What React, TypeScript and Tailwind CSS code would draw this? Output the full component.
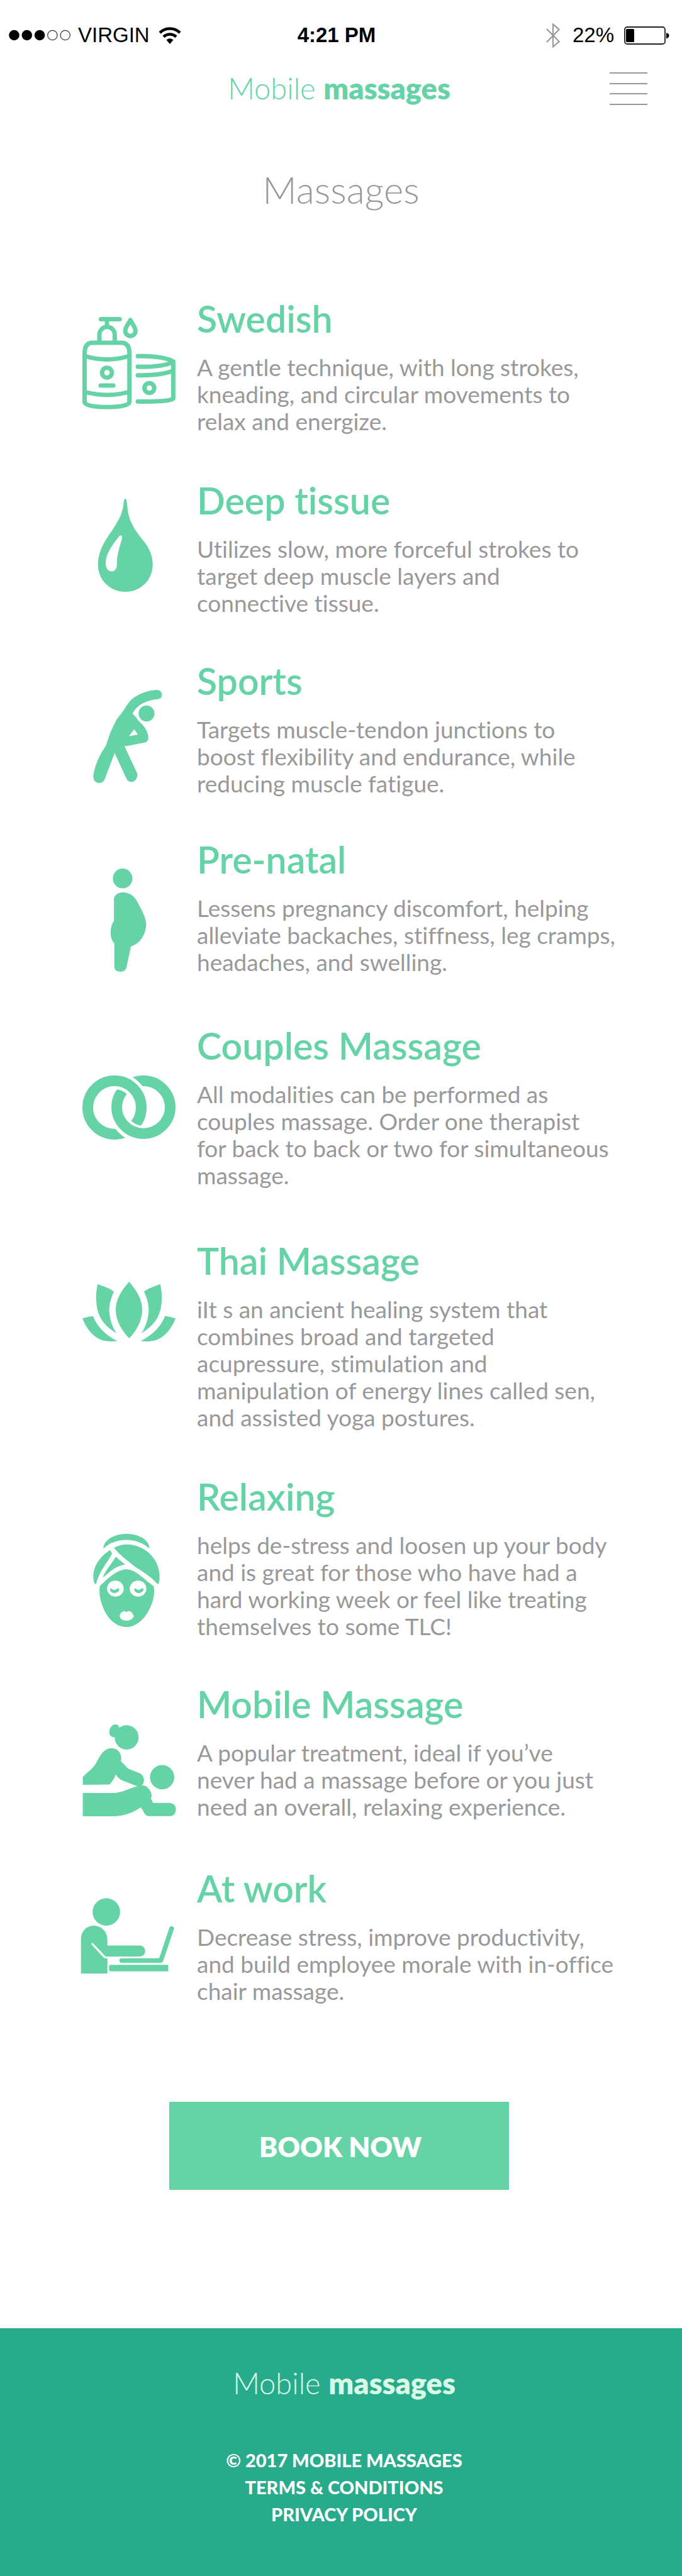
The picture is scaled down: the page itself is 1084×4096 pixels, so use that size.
import type { ReactNode } from "react";

function Glyph({ className, box, children }: { className: string; box: string; children: ReactNode }) {
  return (
    <svg
      aria-hidden="true"
      viewBox={box}
      preserveAspectRatio="none"
      className={`w-[148px] overflow-visible fill-[#66d3a6] ${className}`}
    >
      {children}
    </svg>
  );
}

function LotionIcon() {
  return (
    <svg
      aria-hidden="true"
      viewBox="0 0 148 147"
      className="mt-[29px] h-[147px] w-[148px] fill-none stroke-[#66d3a6] stroke-7"
      strokeLinecap="round"
      strokeLinejoin="round"
    >
      <path d="M3.5 135V58Q3.5 41 16 41H62Q74.7 41 74.7 58V135C74.7 141 58 143.2 39 143.2S3.5 141 3.5 135Z" />
      <path d="M3.5 62Q39 73 74.7 62M3.5 119Q39 129 74.7 119" strokeLinecap="butt" />
      <path d="M29 109H49" />
      <circle cx="39" cy="88.6" r="7.8" />
      <path d="M27 40V28a12.2 12.2 0 0 1 24.4 0V40M39 15V4M29.3 3.5H59.2" />
      <path d="M76.2 5C73 11 68 17 68 22a8.2 8.2 0 0 0 16.4 0C84.4 17 79.5 11 76.2 5Z" />
      <path d="M88 62.3C112 61.5 136 65 144.4 71C136 77 112 80 88 79" />
      <path d="M144.4 71V130C139 133 120 135 88 134.5M88 92.7C112 93.5 135 90 144.4 85" />
      <circle cx="106.4" cy="113" r="7.8" />
    </svg>
  );
}

function DropIcon() {
  return (
    <Glyph box="39 174 257 615" className="mt-[29px] h-[148px]">
      <path d="M157.500 174C161 174 162 195 163 225C166 330 187 390 210 460C226 510 233 560 233 610C233 710 200 789 157.500 789C115 789 82 710 82 610C82 540 94 480 108 430C130 350 150 290 153 200C154 180 155 174 157.500 174Z" />
      <path
        className="fill-white"
        d="M145 417C149 417 149 425 148 440C142 490 134 545 134 610C134 640 127 654 119 654C111 654 103 635 103 600C104 540 118 490 138 430C140 421 142 417 145 417Z"
      />
    </Glyph>
  );
}

function StretchIcon() {
  return (
    <Glyph box="39 233 257 616" className="mt-[46px] h-[148px]">
      <ellipse cx="216" cy="389" rx="22" ry="53" />
      <path
        fillRule="evenodd"
        d="M244 233C254 233 259 248 258 270C257 285 254 292 248 294C215 300 190 330 177 390C184 405 190 420 193 436C207 465 219 500 221 545C221 562 219 574 214 579L162 604H155L190 785C193 805 188 825 183 835C176 845 168 845 162 828L128 650L102 815C99 838 93 849 86 849C76 849 69 835 69 800C73 740 82 690 91 650L104 600L117 510L133 430L150 378L160 340Q170 303 182 282Q210 237 244 233ZM182 493L167 540L192 528Z"
      />
    </Glyph>
  );
}

function PregnancyIcon() {
  return (
    <Glyph box="39 215 257 679" className="mt-[46px] h-[164px]">
      <ellipse cx="150" cy="280.500" rx="27" ry="65" />
      <path d="M150 372C172 372 186 405 194 450C208 510 215 550 215 585C213 660 195 715 173 727L162 850C160 885 155 894 144 894C131 894 127 880 127 855V708C120 690 117 665 117 635C117 605 121 575 126 560V415C127 390 137 372 150 372Z" />
    </Glyph>
  );
}

function RingsIcon() {
  return (
    <svg
      aria-hidden="true"
      viewBox="0 0 148 102"
      className="mt-[79px] h-[102px] w-[148px] fill-none stroke-[#66d3a6] stroke-[17]"
    >
      <circle cx="97" cy="51" r="42.5" />
      <path d="M8.500 51A42.500 42.500 0 0 1 93.500 51" className="stroke-white stroke-[27]" />
      <circle cx="51" cy="51" r="42.5" />
      <path d="M54.500 51A42.500 42.500 0 0 0 139.500 51" className="stroke-white stroke-[27]" />
      <path d="M54.500 50A42.500 42.500 0 0 0 139.500 50" />
    </svg>
  );
}

function LotusIcon() {
  const side = (
    <>
      <path d="M81 317C100 332 115 345 126 366C117 410 113 450 113 490C114 545 122 600 133 638C98 590 82 530 78 450C76 400 77 360 81 317Z" />
      <path d="M68 525C78 590 102 650 135 690C120 694 105 694 92 684C66 660 48 600 39 541C48 534 58 528 68 525Z" />
    </>
  );
  return (
    <Glyph box="39 300 257 393" className="mt-[65px] h-[95px]">
      <path d="M168 300C190 360 204 420 204 485C204 550 190 620 168 672C146 620 131 550 131 485C131 420 145 360 168 300Z" />
      {side}
      <g transform="translate(335 0) scale(-1 1)">{side}</g>
    </Glyph>
  );
}

function FaceIcon() {
  const lid =
    "M115 772C118 765 120 768 121 772Q127 782 133 772C136 764 140 767 141 773C140 790 133 798 127 798C121 798 115 788 115 772Z";
  return (
    <Glyph box="39 407 257 616" className="mt-[91px] h-[148px]">
      <path d="M97 505C97 450 125 407 161 407C197 407 224 450 224 505C207 468 185 447 161 447C136 447 112 468 97 505Z" />
      <path d="M126 500C136 485 148 477 161 477C210 477 252 570 252 690C252 710 251 725 249 738H246C225 680 200 650 182 620C160 580 140 540 126 500Z" />
      <path d="M115 514L121 536C108 600 88 640 77 738H73C70 720 69 705 69 690C69 620 88 555 115 514Z" />
      <path d="M131 558L157 610C132 618 115 655 96 697C98 660 119 610 131 558Z" />
      <path d="M161 641C185 641 205 700 236 753C239 800 236 850 224 905C210 975 185 1023 161 1023C135 1023 110 975 98 905C88 850 84 800 87 753C110 700 135 641 161 641Z" />
      <ellipse className="fill-white" cx="130" cy="769" rx="23" ry="53" />
      <ellipse className="fill-white" cx="192.500" cy="769" rx="23" ry="53" />
      <path d={lid} />
      <path d={lid} transform="translate(67 0)" />
      <path
        className="fill-white"
        d="M161 924C166 914 172 918 175 926L181 949C178 970 170 981 161 981C151 981 142 970 142 949C142 935 148 920 154 918C158 918 160 924 161 924Z"
      />
    </Glyph>
  );
}

function TableMassageIcon() {
  return (
    <Glyph box="39 281 257 604" className="mt-[64px] h-[146px]">
      <ellipse cx="161" cy="366" rx="33" ry="80" />
      <path d="M131 281C137 281 140 292 141 303L128 365C118 368 113 350 113 330C114 300 121 281 131 281Z" />
      <path d="M40 625C60 580 70 570 80 520C90 475 100 437 120 437C137 437 150 475 145 522L165 572L195 600C205 610 209 630 209 650C208 670 204 682 200 686H189L150 650C140 640 135 625 131 610C127 640 120 660 114 676L40 678Z" />
      <path d="M40 732H125C145 730 165 705 189 688C200 680 210 680 216 690C228 715 233 745 228 768L234 797H278C292 799 297 815 297 842C296 868 291 882 283 884H222C213 882 209 865 207 850L200 826C180 860 155 884 125 885H40Z" />
      <ellipse cx="259" cy="628" rx="33.500" ry="80" />
    </Glyph>
  );
}

function LaptopIcon() {
  return (
    <Glyph box="39 228 257 500" className="mt-[47px] h-[120px]">
      <ellipse cx="105" cy="320" rx="38" ry="91" />
      <path d="M35 728V500C35 450 50 411 70 411C92 411 108 450 108 505V543H198C208 546 212 560 212 580C212 600 207 613 198 615H103L68 527C66 523 63 527 64 535L95 615C98 625 102 628 108 628V728Z" />
      <path d="M146 627H251L279 425C281 410 291 410 292 430L262 645C260 655 258 657 255 657H146C139 655 139 629 146 627Z" />
      <path d="M116 671H276V713H116C111 708 111 675 116 671Z" />
    </Glyph>
  );
}

const services = [
  {
    name: "Swedish",
    icon: <LotionIcon />,
    gap: "mb-[73px]",
    text: "A gentle technique, with long strokes,\nkneading, and circular movements to\nrelax and energize.",
  },
  {
    name: "Deep tissue",
    icon: <DropIcon />,
    gap: "mb-[71px]",
    text: "Utilizes slow, more forceful strokes to\ntarget deep muscle layers and\nconnective tissue.",
  },
  {
    name: "Sports",
    icon: <StretchIcon />,
    gap: "mb-[68px]",
    text: "Targets muscle-tendon junctions to\nboost flexibility and endurance, while\nreducing muscle fatigue.",
  },
  {
    name: "Pre-natal",
    icon: <PregnancyIcon />,
    gap: "mb-[80px]",
    text: "Lessens pregnancy discomfort, helping\nalleviate backaches, stiffness, leg cramps,\nheadaches, and swelling.",
  },
  {
    name: "Couples Massage",
    icon: <RingsIcon />,
    gap: "mb-[83px]",
    text: "All modalities can be performed as\ncouples massage. Order one therapist\nfor back to back or two for simultaneous\nmassage.",
  },
  {
    name: "Thai Massage",
    icon: <LotusIcon />,
    gap: "mb-[73px]",
    text: "iIt s an ancient healing system that\ncombines broad and targeted\nacupressure, stimulation and\nmanipulation of energy lines called sen,\nand assisted yoga postures.",
  },
  {
    name: "Relaxing",
    icon: <FaceIcon />,
    gap: "mb-[71px]",
    text: "helps de-stress and loosen up your body\nand is great for those who have had a\nhard working week or feel like treating\nthemselves to some TLC!",
  },
  {
    name: "Mobile Massage",
    icon: <TableMassageIcon />,
    gap: "mb-[77px]",
    text: "A popular treatment, ideal if you’ve\nnever had a massage before or you just\nneed an overall, relaxing experience.",
  },
  {
    name: "At work",
    icon: <LaptopIcon />,
    gap: "",
    text: "Decrease stress, improve productivity,\nand build employee morale with in-office\nchair massage.",
  },
];

function StatusBar() {
  return (
    <div className="grid h-28 grid-cols-[1fr_auto_1fr] items-center pr-5 pl-[14px] font-['Liberation_Sans',sans-serif] text-[33px] leading-10 text-black">
      <div className="flex items-center">
        <svg aria-hidden="true" viewBox="0 0 98 18" className="h-[18px] w-[98px]">
          <circle cx="8.500" cy="9" r="8.300" />
          <circle cx="28.800" cy="9" r="8.300" />
          <circle cx="49.100" cy="9" r="8.300" />
          <circle cx="69.400" cy="9" r="7.700" fill="none" stroke="#333" strokeWidth="1.200" />
          <circle cx="89.700" cy="9" r="7.700" fill="none" stroke="#333" strokeWidth="1.200" />
        </svg>
        <span className="ml-3">VIRGIN</span>
        <svg aria-hidden="true" viewBox="0 0 36 27" className="ml-[14px] h-[27px] w-[36px]">
          <path d="M18 27L12.500 20.500A8 8 0 0 1 23.500 20.500Z" />
          <path d="M8 15.500A14.500 14.500 0 0 1 28 15.500M2 9A23 23 0 0 1 34 9" fill="none" stroke="#000" strokeWidth="4.600" />
        </svg>
      </div>
      <span className="pr-2 font-bold">4:21 PM</span>
      <div className="flex items-center justify-end">
        <svg aria-hidden="true" viewBox="0 0 22 39" className="mr-5 h-[39px] w-[22px]">
          <path d="M1 9L20.500 29L11 37.500V1.500L20.500 10L1 30" fill="none" stroke="#999" strokeWidth="2.200" />
        </svg>
        <span>22%</span>
        <svg aria-hidden="true" viewBox="0 0 72 29" className="ml-4 h-[29px] w-[72px]">
          <rect x="1" y="1" width="64" height="27" rx="4" fill="none" stroke="#222" strokeWidth="1.800" />
          <rect x="3" y="4" width="13" height="21" rx="1.500" />
          <path d="M67 10C70.500 11 71.500 13 71.500 14.500S70.500 18.500 67 19.500Z" />
        </svg>
      </div>
    </div>
  );
}

export default function App() {
  return (
    <div className="flex min-h-screen flex-col bg-white font-['Lato',sans-serif] text-[#999999] [font-variant-ligatures:no-common-ligatures]">
      <StatusBar />
      <header className="grid grid-cols-[1fr_auto_1fr] items-start pt-[3px] pr-[55px] pl-[49px]">
        <a href="#home" className="col-start-2 text-[47px] leading-[50px] font-light text-[#66d3a6]">
          Mobile <span className="font-extrabold">massages</span>
        </a>
        <button type="button" aria-label="Menu" className="flex h-[52px] w-[60px] flex-col justify-between justify-self-end">
          <span className="h-[2px] w-full bg-[#999999]" />
          <span className="h-[2px] w-full bg-[#999999]" />
          <span className="h-[2px] w-full bg-[#999999]" />
          <span className="h-[2px] w-full bg-[#999999]" />
        </button>
      </header>

      <main className="pt-[102px]">
        <h1 className="text-center text-[60px] leading-[64px] font-light">Massages</h1>

        <div className="mt-[142px] pl-[131px]">
          {services.map((service) => (
            <section key={service.name} className={`grid grid-cols-[148px_1fr] items-start gap-x-[34px] ${service.gap}`}>
              {service.icon}
              <div>
                <h2 className="text-[59px] leading-[64px] font-semibold text-[#66d3a6]">{service.name}</h2>
                <p className="mt-[23px] text-[37px] leading-[43px] whitespace-pre-line">{service.text}</p>
              </div>
            </section>
          ))}
        </div>

        <div className="mt-[155px] mb-[220px] flex justify-center pr-[6px]">
          <button type="button" className="h-[140px] w-[540px] bg-[#66d3a6] pt-[2px] pl-1 text-[44px] font-extrabold text-white">
            BOOK NOW
          </button>
        </div>
      </main>

      <footer className="flex flex-1 flex-col items-center bg-[#28ab8b] pt-[62px] pb-[72px] pl-[10px] text-[29px] leading-[43px] font-black text-white">
        <a href="#home" className="mb-[76px] text-[47px] leading-[50px] font-light text-[#d8fbe8]">
          Mobile <span className="font-extrabold">massages</span>
        </a>
        <p>© 2017 MOBILE MASSAGES</p>
        <a href="#terms">TERMS &amp; CONDITIONS</a>
        <a href="#privacy">PRIVACY POLICY</a>
      </footer>
    </div>
  );
}
